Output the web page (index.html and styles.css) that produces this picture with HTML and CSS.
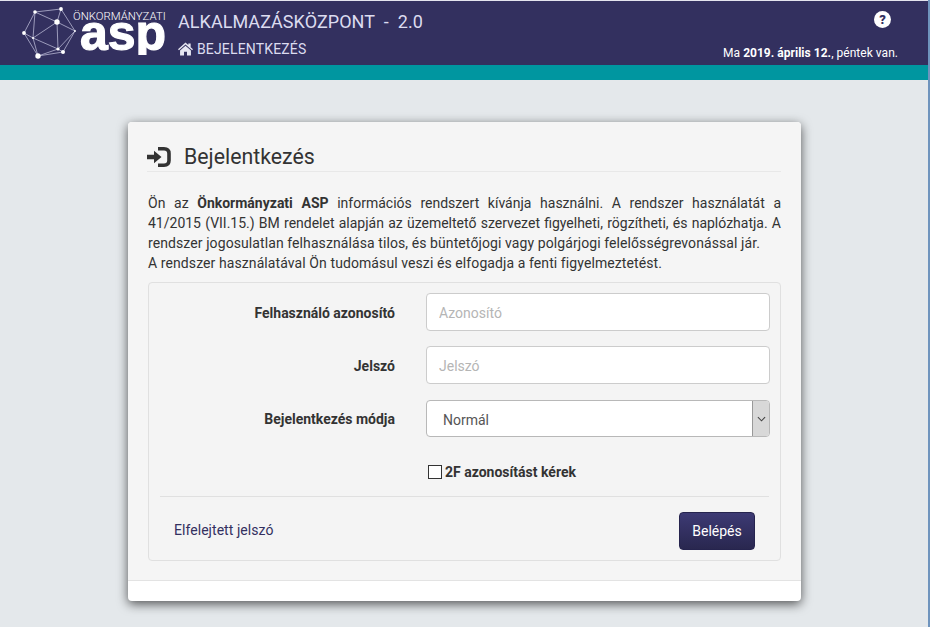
FILE: index.html
```html
<!DOCTYPE html>
<html lang="hu">
<head>
    <meta charset="UTF-8">
    <title>Bejelentkezés</title>
    <link rel="stylesheet" href="styles.css">
</head>
<body>
    <header class="top_bar">
        <svg class="logo_net" viewBox="0 0 56 56" width="56" height="56">
            <g fill="none" stroke="#c9c9e2" stroke-width="0.7">
                <path d="M14 6 L40 3 L54 25 L42 46 L17 50 L3 27 Z"/>
                <path d="M14 6 L36 16 L40 3 M36 16 L54 25 M36 16 L12 32 L3 27 M12 32 L37 43 L54 25 M37 43 L17 50 M36 16 L37 43 L42 46 M14 6 L12 32 L17 50"/>
            </g>
            <g fill="#fff">
                <circle cx="14" cy="6" r="1.8"/>
                <circle cx="40" cy="3" r="1.9"/>
                <circle cx="36" cy="16" r="2.7"/>
                <circle cx="3" cy="27" r="1.9"/>
                <circle cx="54" cy="25" r="0.9"/>
                <circle cx="12" cy="32" r="1"/>
                <circle cx="37" cy="43" r="1.6"/>
                <circle cx="42" cy="46" r="2"/>
                <circle cx="17" cy="50" r="2.7"/>
            </g>
        </svg>
        <div class="logo_text">
            <span class="logo_small">ÖNKORMÁNYZATI</span>
            <span class="logo_big">asp</span>
        </div>
        <div class="app_title">
            <div class="app_name">ALKALMAZÁSKÖZPONT &nbsp;-&nbsp; 2.0</div>
            <div class="crumb">
                <svg viewBox="0 0 16 14" width="15" height="14">
                    <path fill="#e6e6f2" d="M8 0 L11 2.7 V1 H13.5 V5 L16 7.2 L15 8.4 L8 2.2 L1 8.4 L0 7.2 Z M2.2 8.6 L8 3.5 L13.8 8.6 V14 H9.6 V10 H6.4 V14 H2.2 Z"/>
                </svg>
                BEJELENTKEZÉS
            </div>
        </div>
        <div class="top_right">
            <span class="help_icon">?</span>
            <div class="today">Ma <b>2019. április 12.</b>, péntek van.</div>
        </div>
    </header>
    <div class="teal_bar"></div>
    <div class="window_edge"></div>

    <main class="login_card">
        <div class="card_body">
            <h1 class="card_title">
                <svg viewBox="0 0 24 20" width="24" height="20">
                    <path fill="none" stroke="#333" stroke-width="3.6" d="M11 1.8 H17 Q22 1.8 22 6.5 V13.5 Q22 18.2 17 18.2 H11"/>
                    <path fill="#333" d="M0 7.7 H7 V3.8 L14.5 10 L7 16.2 V12.3 H0 Z"/>
                </svg>
                Bejelentkezés
            </h1>
            <div class="notice">
                <div class="full_line">Ön az <b>Önkormányzati ASP</b> információs rendszert kívánja használni. A rendszer használatát a</div>
                <div class="full_line">41/2015 (VII.15.) BM rendelet alapján az üzemeltető szervezet figyelheti, rögzítheti, és naplózhatja. A</div>
                <div>rendszer jogosulatlan felhasználása tilos, és büntetőjogi vagy polgárjogi felelősségrevonással jár.</div>
                <div>A rendszer használatával Ön tudomásul veszi és elfogadja a fenti figyelmeztetést.</div>
            </div>

            <form class="well">
                <div class="form_row">
                    <label for="user_id">Felhasználó azonosító</label>
                    <input type="text" id="user_id" placeholder="Azonosító">
                </div>
                <div class="form_row">
                    <label for="password">Jelszó</label>
                    <input type="password" id="password" placeholder="Jelszó">
                </div>
                <div class="form_row select_row">
                    <label for="mode">Bejelentkezés módja</label>
                    <div class="select_wrap">
                        <select id="mode"><option>Normál</option></select>
                        <span class="select_arrow">
                            <svg viewBox="0 0 10 6" width="9" height="6"><path fill="none" stroke="#444" stroke-width="1.2" d="M1 1 L5 5 L9 1"/></svg>
                        </span>
                    </div>
                </div>
                <div class="check_row">
                    <span class="check_box"></span>
                    <span>2F azonosítást kérek</span>
                </div>
                <div class="form_footer">
                    <a class="forgot" href="#">Elfelejtett jelszó</a>
                    <button type="button">Belépés</button>
                </div>
            </form>
        </div>
        <div class="card_footer"></div>
    </main>
</body>
</html>
```

FILE: styles.css
```css
body {
    font-family: Roboto, Arial, sans-serif;
    font-size: 14px;
    color: #333;
    background-color: #e4e8eb;
    margin: 0;
    height: 627px;
    overflow: hidden;
}

.top_bar {
    display: flex;
    height: 65px;
    box-sizing: border-box;
    border-top: 1px solid #e4e4ee;
    background-color: #33305f;
    color: #fff;
    padding-left: 21px;
}

.logo_net {
    margin-top: 5px;
}

.logo_text {
    width: 93px;
    margin-left: -4px;
    margin-right: 12px;
}

.logo_small {
    display: block;
    margin-top: 8px;
    font-size: 11.4px;
    line-height: 14px;
    font-weight: 300;
    white-space: nowrap;
}

/* the real logo has a short descender, so the p is cut at the bottom */
.logo_big {
    display: block;
    height: 33px;
    margin-top: -1px;
    margin-left: 7px;
    font-family: "Liberation Sans", Arial, sans-serif;
    font-size: 50px;
    line-height: 22px;
    font-weight: bold;
    -webkit-text-stroke: 1.2px #fff;
    clip-path: inset(-6px 0 0 0);
}

.app_name {
    margin-top: 10px;
    font-size: 18px;
    line-height: 22px;
    letter-spacing: 0.05px;
    color: #dcdcf0;
    white-space: nowrap;
}

.crumb {
    display: flex;
    align-items: center;
    gap: 4px;
    margin-top: 6px;
    font-size: 14px;
    line-height: 20px;
    letter-spacing: 0.15px;
    color: #dcdcf0;
}

.top_right {
    margin-left: auto;
    padding-right: 32px;
    text-align: right;
    font-size: 12px;
    letter-spacing: 0.03px;
}

.help_icon {
    display: block;
    width: 17px;
    height: 17px;
    line-height: 17px;
    margin: 10px 7px 0 auto;
    border-radius: 50%;
    background: #fff;
    color: #33305f;
    font-size: 13px;
    font-weight: 900;
    text-align: center;
}

.today {
    margin-top: 17px;
    line-height: 16px;
}

.teal_bar {
    height: 15px;
    background-color: #0096a0;
}

.window_edge {
    position: absolute;
    top: 0;
    right: 0;
    bottom: 0;
    width: 2px;
    background: #6f94bd;
}

.login_card {
    width: 673px;
    margin: 42px 0 0 128px;
    border-radius: 4px;
    background: #fff;
    box-shadow: 0 3px 11px rgba(0, 0, 0, 0.65);
}

.card_body {
    box-sizing: border-box;
    height: 459px;
    padding: 20px 20px 0;
    background: #f5f5f5;
    border-bottom: 1px solid #e3e3e3;
    border-radius: 4px 4px 0 0;
}

.card_footer {
    height: 20px;
}

.card_title {
    display: flex;
    align-items: center;
    gap: 13px;
    height: 29px;
    margin: 0 0 21px -1px;
    border-bottom: 1px solid #e8e8e8;
    font-size: 21.3px;
    font-weight: 400;
    line-height: 31px;
}

.notice {
    margin: 0 0 9px;
    line-height: 20px;
    letter-spacing: 0.09px;
    white-space: nowrap;
}

.full_line {
    letter-spacing: 0;
    white-space: normal;
    text-align: justify;
    text-align-last: justify;
}

.well {
    box-sizing: border-box;
    height: 279px;
    padding: 10px 10px 0 11px;
    border: 1px solid #e0e0e0;
    border-radius: 4px;
    background: #f4f4f4;
}

.form_row {
    display: grid;
    grid-template-columns: 236px 344px;
    column-gap: 30px;
    align-items: center;
    margin-bottom: 15px;
}

.select_row {
    margin-top: 16px;
}

.form_row label {
    text-align: right;
    font-weight: bold;
    padding: 1px 1px 0 0;
}

input,
select {
    display: block;
    box-sizing: border-box;
    width: 100%;
    height: 38px;
    padding: 2px 12px 0;
    border: 1px solid #ccc;
    border-radius: 4px;
    background: #fff;
    outline: none;
    font-family: Roboto, Arial, sans-serif;
    font-size: 14px;
    color: #555;
}

input::placeholder {
    color: #b5b5b5;
}

select {
    -webkit-appearance: none;
    appearance: none;
    height: 37px;
    padding-left: 16px;
    border-color: #b8b8b8;
}

.select_wrap {
    position: relative;
}

.select_arrow {
    position: absolute;
    top: 1px;
    right: 1px;
    bottom: 1px;
    width: 16px;
    display: flex;
    align-items: center;
    justify-content: center;
    background: #d8d8d8;
    border-left: 1px solid #999;
    border-radius: 0 3px 3px 0;
}

.check_row {
    display: flex;
    align-items: center;
    gap: 3px;
    height: 18px;
    margin: 26px 0 0 268px;
    font-weight: bold;
}

.check_box {
    box-sizing: border-box;
    width: 14px;
    height: 14px;
    border: 1px solid #333;
    background: #fff;
}

.form_footer {
    display: flex;
    justify-content: space-between;
    align-items: center;
    margin: 15px 1px 0 0;
    padding: 15px 14px 0 14px;
    border-top: 1px solid #e0e0e0;
}

.forgot {
    color: #33305f;
    text-decoration: none;
    margin-bottom: 2px;
    letter-spacing: 0.05px;
}

button {
    width: 76px;
    height: 38px;
    border: 1px solid #26244e;
    border-radius: 4px;
    background: linear-gradient(#3d3a74, #29274f);
    color: #fff;
    font-family: Roboto, Arial, sans-serif;
    font-size: 14px;
    cursor: pointer;
}
```
